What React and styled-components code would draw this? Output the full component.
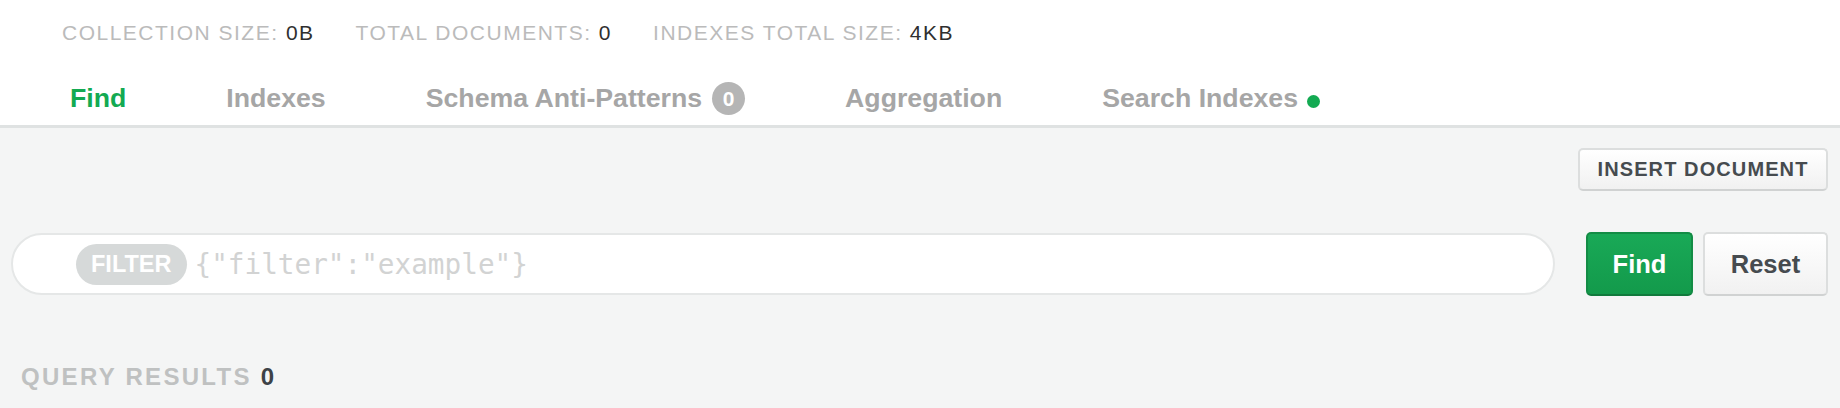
import React from 'react';
import styled, { createGlobalStyle } from 'styled-components';

const GlobalStyle = createGlobalStyle`
    *{
        box-sizing: border-box;
    }
    body{
        margin: 0;
        background: #f4f5f5;
        font-family: "Liberation Sans", Arial, sans-serif;
    }
`;

const Header = styled.header`
    background: #fff;
    border-bottom: 3px solid #dfe2e2;
`;

const Stats = styled.div`
    display: flex;
    gap: 41px;
    height: 72px;
    padding: 20px 0 0 62px;
    font-size: 21px;
    line-height: 26px;
    letter-spacing: 1.5px;
    color: #bbbbbb;
`;

const Value = styled.span`
    color: #2f2f2f;
`;

const Tabs = styled.nav`
    display: flex;
    height: 53px;
    padding-left: 20px;
`;

const Tab = styled.div`
    display: flex;
    align-items: center;
    padding: 0 50px;
    font-size: 26.7px;
    font-weight: bold;
    color: ${p => p.active ? '#13aa52' : '#a6a6a6'};
    cursor: pointer;
`;

const Badge = styled.span`
    display: inline-flex;
    align-items: center;
    justify-content: center;
    width: 33px;
    height: 33px;
    margin-left: 10px;
    border-radius: 50%;
    background: #b5b5b5;
    color: #fff;
    font-size: 21px;
`;

const Dot = styled.span`
    width: 13px;
    height: 13px;
    margin: 6px 0 0 9px;
    border-radius: 50%;
    background: #13aa52;
`;

const Main = styled.main`
    padding: 20px 12px 0 11px;
`;

const Toolbar = styled.div`
    display: flex;
    justify-content: flex-end;
`;

const Button = styled.button`
    height: ${p => p.big ? '64px' : '43px'};
    width: ${p => p.w}px;
    padding: 0;
    border-radius: 5px;
    font-family: "Liberation Sans", Arial, sans-serif;
    font-weight: bold;
    font-size: ${p => p.big ? '25.5px' : '20px'};
    letter-spacing: ${p => p.big ? '0' : '1.1px'};
    cursor: pointer;
    color: ${p => p.primary ? '#fff' : '#464b4f'};
    border: 2px solid ${p => p.primary ? '#138c45' : '#dcdede'};
    border-bottom-color: ${p => p.primary ? '#117a3c' : '#d0d2d2'};
    background: ${p => p.primary
        ? 'linear-gradient(#19a957, #139a4b)'
        : 'linear-gradient(#fff, #f1f1f1)'};
`;

const QueryRow = styled.div`
    display: flex;
    align-items: center;
    margin-top: 41px;
`;

const FilterBar = styled.div`
    flex: 1;
    display: flex;
    align-items: center;
    height: 62px;
    padding-left: 63px;
    border: 2px solid #e5e7e7;
    border-radius: 31px;
    background: #fff;
`;

const FilterPill = styled.span`
    display: flex;
    align-items: center;
    height: 41px;
    padding: 0 15px;
    border-radius: 21px;
    background: #d6d9d9;
    color: #fff;
    font-size: 23.5px;
    font-weight: bold;
`;

const FilterInput = styled.input`
    flex: 1;
    margin-left: 6px;
    border: none;
    outline: none;
    background: transparent;
    font-family: "DejaVu Sans Mono", monospace;
    font-size: 27.7px;
    color: #333;

    &::placeholder{
        color: #d2d3d3;
    }
`;

const Actions = styled.div`
    display: flex;
    gap: 10px;
    margin-left: 31px;
`;

const Results = styled.div`
    margin: 66px 0 0 10px;
    font-size: 24px;
    line-height: 30px;
    font-weight: bold;
    letter-spacing: 2.3px;
    color: #bfc1c1;

    span{
        color: #3d4247;
    }
`;

const App = ()=>{
    return(
        <>
            <GlobalStyle/>
            <Header>
                <Stats>
                    <div>COLLECTION SIZE: <Value>0B</Value></div>
                    <div>TOTAL DOCUMENTS: <Value>0</Value></div>
                    <div>INDEXES TOTAL SIZE: <Value>4KB</Value></div>
                </Stats>
                <Tabs>
                    <Tab active>Find</Tab>
                    <Tab>Indexes</Tab>
                    <Tab>Schema Anti-Patterns<Badge>0</Badge></Tab>
                    <Tab>Aggregation</Tab>
                    <Tab>Search Indexes<Dot/></Tab>
                </Tabs>
            </Header>
            <Main>
                <Toolbar>
                    <Button w={250}>INSERT DOCUMENT</Button>
                </Toolbar>
                <QueryRow>
                    <FilterBar>
                        <FilterPill>FILTER</FilterPill>
                        <FilterInput placeholder={'{"filter":"example"}'}/>
                    </FilterBar>
                    <Actions>
                        <Button big primary w={107}>Find</Button>
                        <Button big w={125}>Reset</Button>
                    </Actions>
                </QueryRow>
                <Results>QUERY RESULTS <span>0</span></Results>
            </Main>
        </>
    );
}

export default App;
